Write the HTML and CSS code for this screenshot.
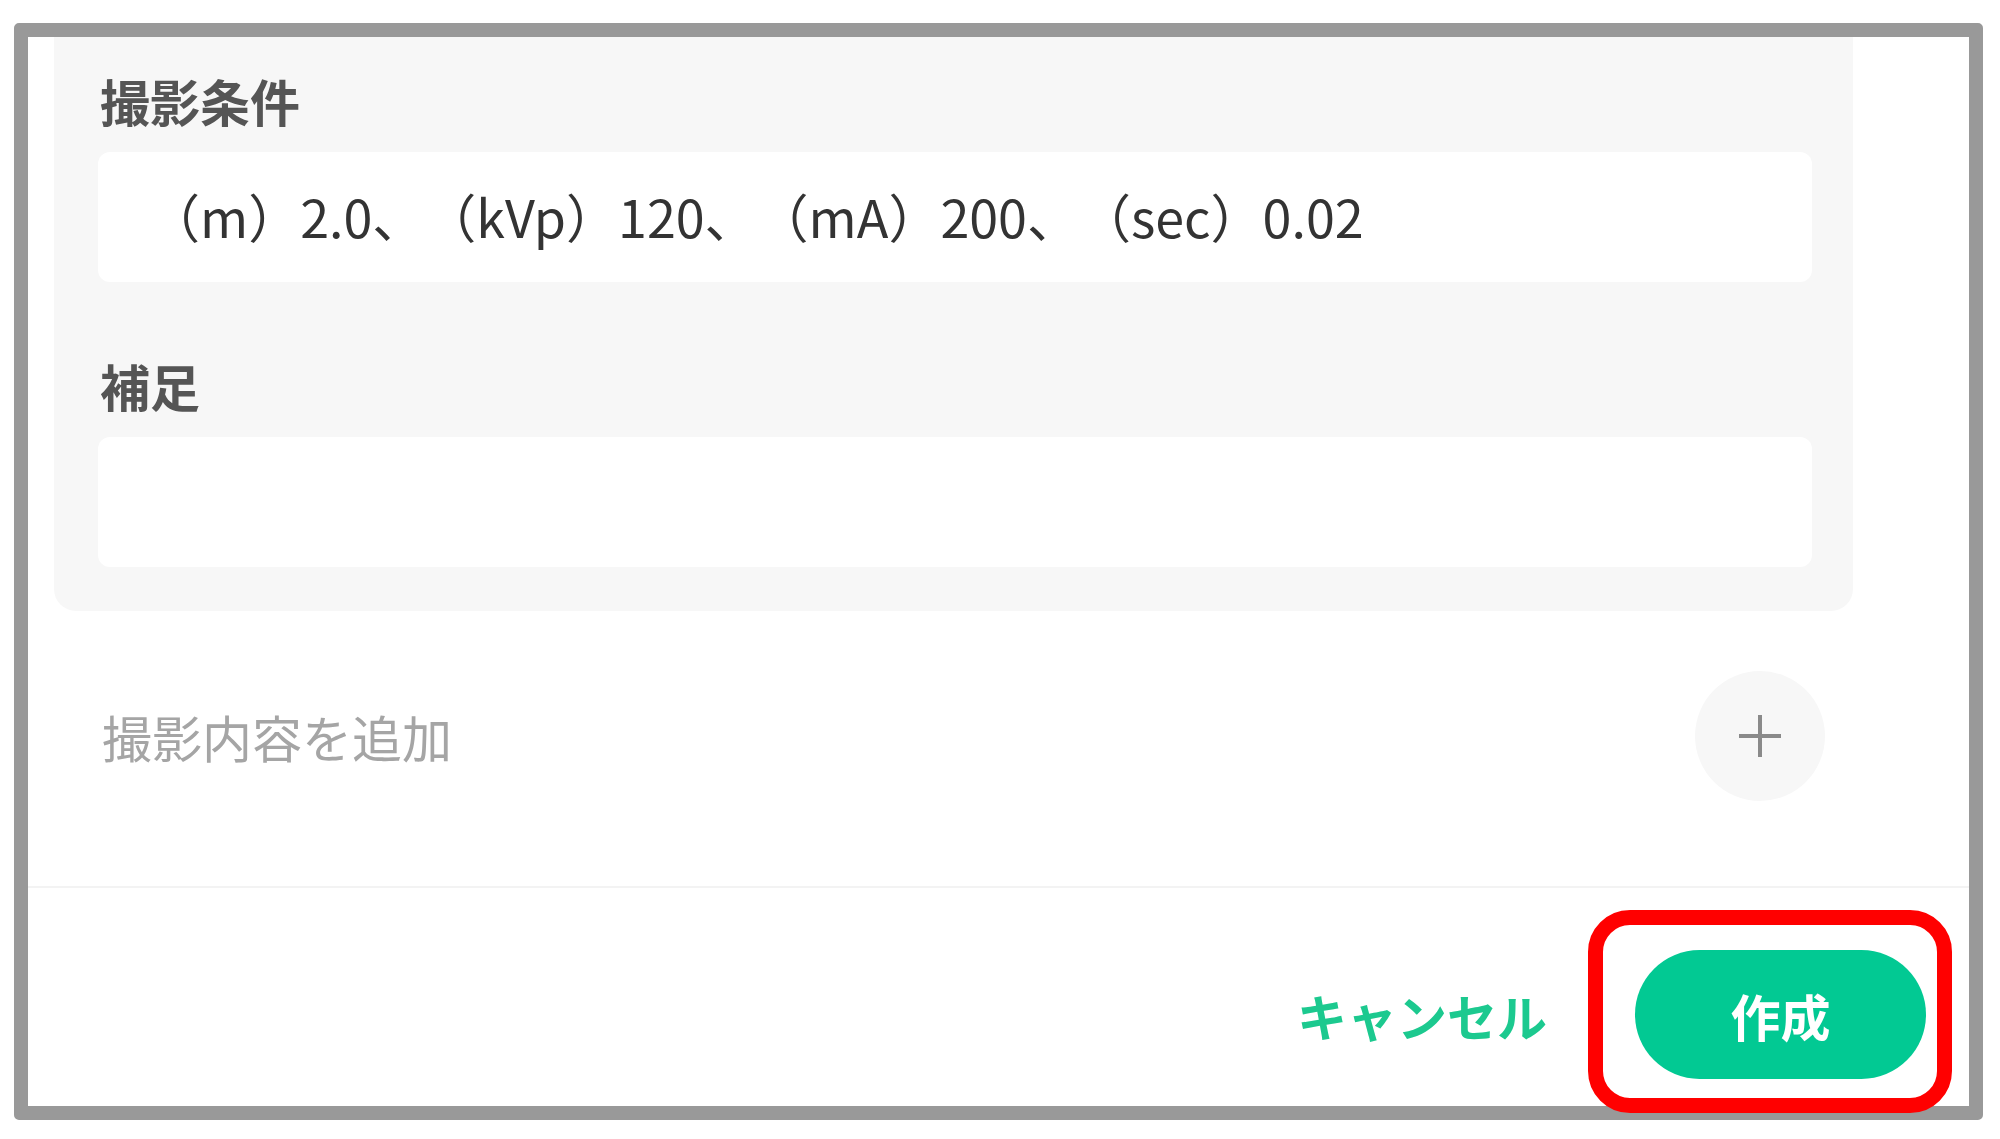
FILE: index.html
```html
<!DOCTYPE html>
<html lang="ja">
<head>
<meta charset="utf-8">
<title>撮影条件</title>
<link rel="stylesheet" href="styles.css">
</head>
<body>
<div class="frame">
  <div class="content">
    <div class="panel">
      <div class="field">
        <div class="label">撮影条件</div>
        <div class="input">（m）2.0、（kVp）120、（mA）200、（sec）0.02</div>
      </div>
      <div class="field field-second">
        <div class="label">補足</div>
        <div class="input"></div>
      </div>
    </div>
    <div class="add-row">
      <span class="add-label">撮影内容を追加</span>
      <button class="add-btn" type="button" aria-label="追加">
        <svg width="44" height="44" viewBox="0 0 44 44"><path d="M22 1V43M1 22H43" stroke="#8a8a8a" stroke-width="4" fill="none"/></svg>
      </button>
    </div>
  </div>
  <div class="footer">
    <button class="cancel" type="button">キャンセル</button>
    <button class="create" type="button">作成</button>
    <div class="highlight"></div>
  </div>
</div>
</body>
</html>
```
FILE: styles.css
```css
html, body {
  margin: 0;
  padding: 0;
  background: #ffffff;
}
body {
  font-family: "Noto Sans CJK JP", "Noto Sans", sans-serif;
}
.frame {
  box-sizing: border-box;
  width: 1969px;
  height: 1097px;
  margin: 23px 0 0 14px;
  border: 14px solid #999999;
  border-radius: 5px;
  background: #ffffff;
  display: flex;
  flex-direction: column;
}
.content {
  height: 849px;
  overflow: hidden;
  padding: 0 116px 0 26px;
}
.panel {
  background: #f7f7f7;
  border-radius: 0 0 22px 22px;
  padding: 26px 41px 44px 44px;
}
.label {
  font-size: 50px;
  line-height: 75px;
  font-weight: 700;
  color: #555555;
  padding-left: 2px;
  margin-bottom: 14px;
}
.field-second {
  margin-top: 66px;
}
.input {
  box-sizing: border-box;
  height: 130px;
  background: #ffffff;
  border-radius: 12px;
  padding-left: 50px;
  padding-bottom: 3px;
  display: flex;
  align-items: center;
  font-size: 52px;
  color: #333333;
  white-space: pre;
  text-spacing-trim: space-all;
}
.add-row {
  display: flex;
  align-items: center;
  justify-content: space-between;
  margin-top: 60px;
  padding: 0 28px 0 48px;
}
.add-label {
  font-size: 50px;
  color: #a5a5a5;
}
.add-btn {
  width: 130px;
  height: 130px;
  border-radius: 50%;
  border: none;
  background: #f7f7f7;
  display: flex;
  align-items: center;
  justify-content: center;
  padding: 0;
}
.footer {
  position: relative;
  flex: 1;
  border-top: 2px solid #f3f3f3;
  display: flex;
  justify-content: flex-end;
  align-items: flex-start;
  padding: 62px 43px 0 0;
}
.cancel {
  height: 129px;
  border: none;
  background: transparent;
  padding: 0 44px;
  margin-right: 44px;
  font-family: inherit;
  font-size: 50px;
  font-weight: 700;
  color: #1cc98f;
}
.create {
  width: 291px;
  height: 129px;
  border: none;
  border-radius: 65px;
  background: #02c993;
  color: #ffffff;
  font-family: inherit;
  font-size: 50px;
  font-weight: 700;
  padding: 0;
}
.highlight {
  position: absolute;
  right: 17px;
  bottom: -7px;
  width: 364px;
  height: 203px;
  box-sizing: border-box;
  border: 15px solid #ff0000;
  border-radius: 42px;
  pointer-events: none;
}
```
